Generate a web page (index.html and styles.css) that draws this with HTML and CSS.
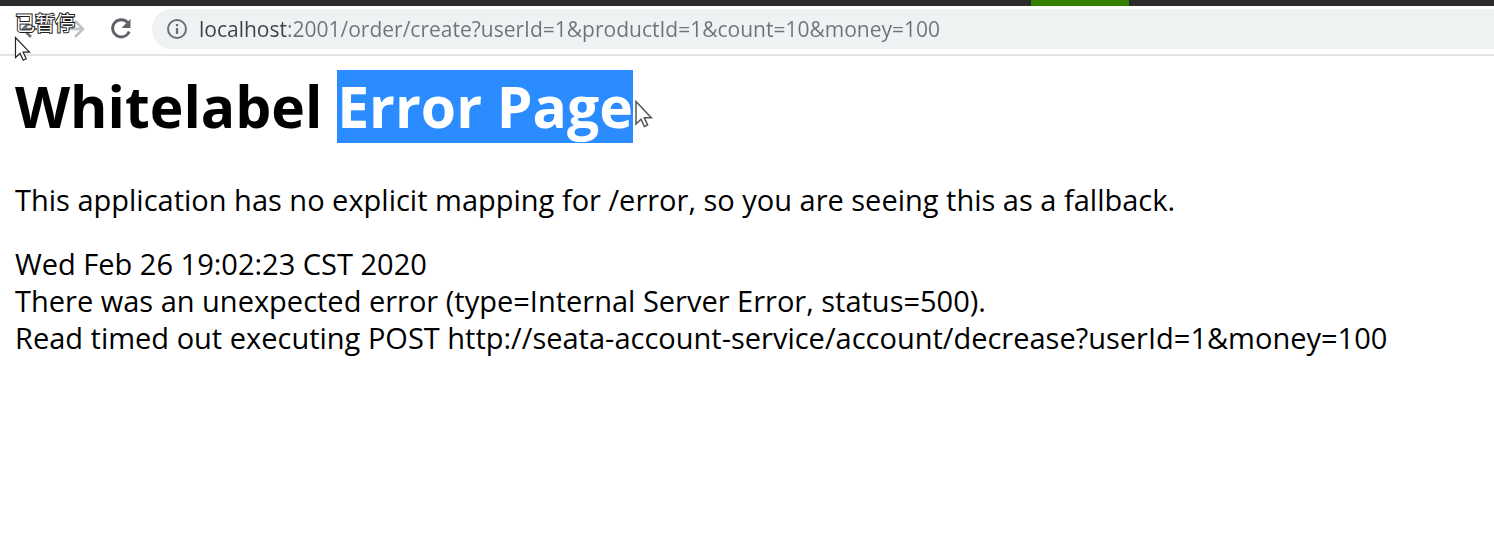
FILE: index.html
```html
<!doctype html>
<html lang="en">
<head>
	<meta charset="utf-8">
	<title>Whitelabel Error Page</title>
	<meta name="viewport" content="width=device-width, initial-scale=1">
	<link rel="stylesheet" href="styles.css">
</head>

<body>
	<div class="tabstrip">
		<i class="tabstrip-mark"></i>
	</div>

	<div class="toolbar">
		<button type="button" class="nav-btn" aria-label="Back">
			<svg width="24" height="24" viewBox="0 0 24 24" fill="none" stroke="#6b6e72" stroke-width="2.6"><path d="M24 12H10M18 4L10 12l8 8"/></svg>
		</button>
		<button type="button" class="nav-btn" aria-label="Forward">
			<svg width="24" height="24" viewBox="0 0 24 24" fill="none" stroke="#c0c2c4" stroke-width="2.6"><path d="M6 12h16M14 4l8 8-8 8"/></svg>
		</button>
		<button type="button" class="nav-btn nav-reload" aria-label="Reload">
			<svg width="24" height="24" viewBox="0 0 24 24" fill="none" stroke="#5f6368" stroke-width="2.8"><path d="M18.600 5.600A8.600 8.600 0 1 0 20.200 14.500"/><path fill="#5f6368" stroke="none" d="M21.500 2v9h-9z"/></svg>
		</button>
		<form class="address">
			<button type="button" class="address-info" aria-label="View site information">
				<svg width="22" height="22" viewBox="0 0 22 22" fill="none" stroke="#6b6e72" stroke-width="2"><circle cx="11" cy="11" r="9"/><path d="M11 10v6M11 6v2.300" stroke-width="2.300"/></svg>
			</button>
			<input type="text" class="address-url" aria-label="Address" spellcheck="false" value="localhost:2001/order/create?userId=1&amp;productId=1&amp;count=10&amp;money=100">
		</form>
	</div>

	<div class="content">
		<h1>Whitelabel <span class="selected">Error Page</span></h1>
		<p>This application has no explicit mapping for /error, so you are seeing this as a fallback.</p>
		<div>Wed Feb 26 19:02:23 CST 2020</div>
		<div>There was an unexpected error (type=Internal Server Error, status=500).</div>
		<div>Read timed out executing POST http://seata-account-service/account/decrease?userId=1&amp;money=100</div>
	</div>

	<!-- player overlay -->
	<div class="paused" lang="zh-CN">已暂停</div>
	<svg class="cursor cursor-player" width="18" height="26" viewBox="0 0 18 26"><path d="M1.500 1.500v20l4.500-4.300 3.200 7 3-1.400-3.100-6.600h6.300z" fill="#fff" stroke="#222" stroke-width="1.200"/></svg>
	<svg class="cursor cursor-page" width="20" height="28" viewBox="0 0 20 28"><path d="M2 1.500v22.500l5-4.800 3.400 7.300 3.200-1.500-3.300-7.200h7z" fill="#fff" stroke="#555" stroke-width="1.500"/></svg>
</body>
</html>
```
FILE: styles.css
```css
body, h1, p {
	padding: 0;
	margin: 0;
}
body {
	position: relative;
	background: #fff;
	color: #000;
	font-family: "Open Sans", "Noto Sans", sans-serif;
}
button, input {
	padding: 0;
	border: 0;
	background: none;
	font-family: inherit;
}

.tabstrip {
	height: 6px;
	background: #2b2b2b;
}
.tabstrip-mark {
	display: block;
	width: 98px;
	height: 100%;
	margin-left: 69%;
	background: #338000;
}

.toolbar {
	display: flex;
	align-items: center;
	padding: 3px 0 5px 13px;
	border-bottom: 2px solid #e4e5e6;
}
.nav-btn {
	display: flex;
	flex: none;
	margin-right: 24px;
}
.nav-reload {
	margin-right: 19px;
}

.address {
	display: flex;
	flex: 1;
	align-items: center;
	gap: 11px;
	min-width: 0;
	height: 40px;
	padding-left: 14px;
	border-radius: 20px 0 0 20px;
	background: #eef2f3;
}
.address-info {
	display: flex;
}
.address-url {
	flex: 1;
	min-width: 0;
	height: 36px;
	font-size: 21px;
	outline: 0;
	/* host dark, the rest grey */
	color: transparent;
	background: linear-gradient(to right, #3c4043 88px, #6f7377 88px);
	-webkit-background-clip: text;
	background-clip: text;
}

.content {
	padding: 14px 15px;
	font-size: 29px;
	line-height: 37px;
}
.content h1 {
	font-size: 57px;
	line-height: 73px;
}
.content p {
	margin: 38px 0 27px;
}
.selected {
	display: inline-block;
	background: #2b8cff;
	color: #fff;
}

.paused {
	position: absolute;
	left: 15px;
	top: 12px;
	font: 20px/22px "Noto Sans CJK SC", sans-serif;
	color: #fff;
	-webkit-text-stroke: 2px #222;
	paint-order: stroke fill;
}
.cursor {
	position: absolute;
}
.cursor-player {
	left: 14px;
	top: 36px;
}
.cursor-page {
	left: 634px;
	top: 100px;
}
```
